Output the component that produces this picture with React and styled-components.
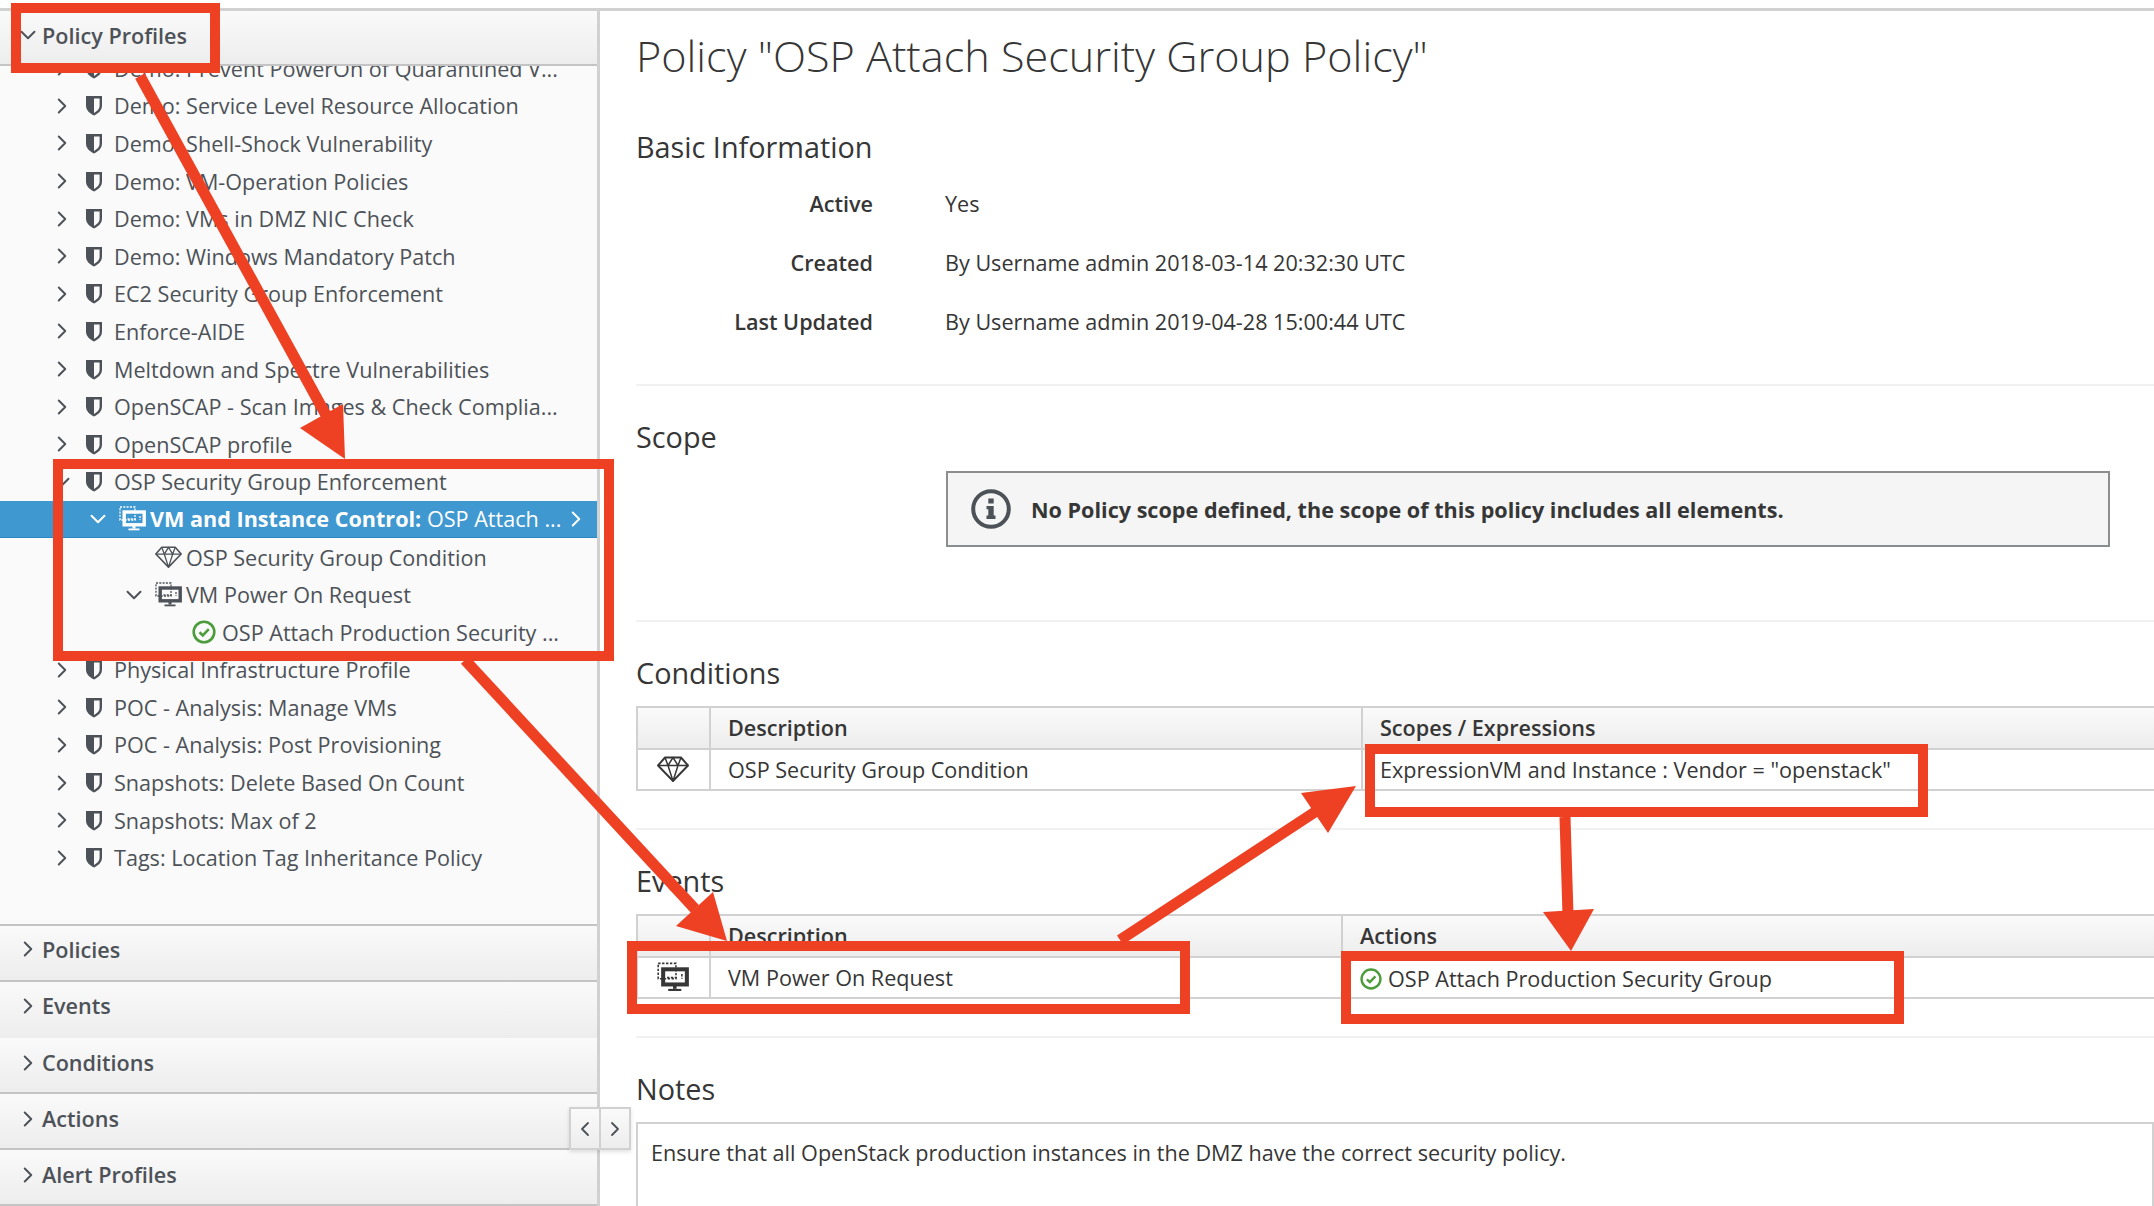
import React from 'react';
import styled, { createGlobalStyle } from 'styled-components';
import { ChevronRight, ChevronDown, ChevronLeft } from 'lucide-react';

const Global = createGlobalStyle`
  html, body { margin: 0; padding: 0; background: #fff; }
  body { font-family: "Open Sans", "Liberation Sans", sans-serif; color: #363636; }
  * { box-sizing: border-box; }
`;

const Page = styled.div`
  position: relative;
  width: 2154px;
  height: 1206px;
  overflow: hidden;
  padding-top: 8px;
`;
const Main = styled.div`
  position: relative;
  display: flex;
  height: 1198px;
  border-top: 3px solid #d1d1d1;
`;
const Sidebar = styled.aside`
  display: flex;
  flex-direction: column;
  flex: 0 0 600px;
  min-width: 0;
  background: #fafafa;
  border-right: 3px solid #d1d1d1;
`;
const PanelHeader = styled.div`
  display: flex;
  align-items: center;
  flex: 0 0 ${p => p.$h || 56}px;
  padding: 0 0 ${p => p.$lift || 0}px 20px;
  gap: 6px;
  font-size: 21.6px;
  font-weight: 600;
  color: #4d5258;
  background: linear-gradient(#fafafa, #ededed);
  border-bottom: ${p => (p.$flat ? 'none' : '2px solid #c4c4c4')};
`;
const HeaderRule = styled.div`
  flex: 0 0 2px;
  background: #c4c4c4;
`;
const HeaderToggle = styled.span`
  display: flex;
  justify-content: center;
  flex: 0 0 16px;
  min-width: 0;
  svg { flex: none; }
`;
const Tree = styled.div`
  flex: 1;
  min-height: 0;
  overflow: hidden;
`;
const TreeList = styled.ul`
  list-style: none;
  margin: -16.5px 0 0;
  padding: 0;
`;
const Row = styled.li`
  display: flex;
  align-items: center;
  height: 37.6px;
  padding-left: ${p => 53 + p.$level * 36}px;
  padding-right: 8px;
  font-size: 21.6px;
  white-space: nowrap;
  color: ${p => (p.$selected ? '#fff' : '#4d5258')};
  background: ${p => (p.$selected ? '#3f98d0' : 'transparent')};
  border-bottom: ${p => (p.$selected ? '1px solid #2c86c1' : 'none')};
`;
const Toggle = styled.span`
  display: flex;
  justify-content: center;
  flex: 0 0 18px;
  min-width: 0;
  margin-right: 14px;
  svg { flex: none; }
`;
const NodeIcon = styled.span`
  display: flex;
  align-items: center;
  flex: 0 0 ${p => 29 + (p.$pull || 0)}px;
  min-width: 0;
  margin-left: ${p => -(p.$pull || 0)}px;
  svg { flex: none; }
`;
const Label = styled.span`
  flex: 1;
  min-width: 0;
  b { font-weight: 700; }
`;

const Content = styled.main`
  flex: 1;
  min-width: 0;
  overflow: hidden;
  padding-left: 36px;
`;
const Title = styled.h1`
  margin: 19px 0 0;
  height: 52px;
  line-height: 52px;
  font-size: 43.2px;
  font-weight: 300;
  color: #363636;
  white-space: nowrap;
`;
const Section = styled.section`
  padding: ${p => p.$top ?? 33}px 0 ${p => p.$bottom ?? 37}px;
  border-bottom: ${p => (p.$last ? 'none' : '2px solid #f1f1f1')};
`;
const Heading = styled.h2`
  margin: 0 0 ${p => p.$gap ?? 15}px;
  height: 36px;
  line-height: 36px;
  font-size: 28.8px;
  font-weight: 400;
  color: #363636;
`;
const Fact = styled.div`
  display: flex;
  align-items: center;
  height: 59px;
  font-size: 21.6px;
`;
const FactLabel = styled.div`
  flex: 0 0 237px;
  text-align: right;
  font-weight: 600;
`;
const FactValue = styled.div`
  margin-left: 72px;
`;
const Alert = styled.div`
  display: flex;
  align-items: center;
  gap: 20px;
  margin: 0 44px 36px 310px;
  height: 76px;
  padding: 1px 0 0 23px;
  background: #f5f5f5;
  border: 2px solid #8b8d8f;
  font-size: 21.6px;
  font-weight: 700;
`;
const Table = styled.table`
  width: 1600px;
  table-layout: fixed;
  border-collapse: collapse;
  font-size: 21.6px;
`;
const Th = styled.th`
  height: 42px;
  padding: 0 17px;
  text-align: left;
  font-weight: 600;
  background: linear-gradient(#fafafa, #ededed);
  border: 2px solid #d1d1d1;
`;
const Td = styled.td`
  height: 41px;
  padding: 0 17px;
  border: 2px solid #d1d1d1;
  white-space: nowrap;
  svg { display: block; }
`;
const IconTd = styled(Td)`
  padding: 0 0 0 19px;
`;
const ActionCell = styled.span`
  display: inline-flex;
  align-items: center;
  gap: 6px;
  vertical-align: middle;
  padding-top: 2px;
`;
const Notes = styled.div`
  height: 200px;
  padding: 14px 13px;
  border: 2px solid #d1d1d1;
  font-size: 21.6px;
  line-height: 30px;
  background: #fff;
`;
const SplitterButtons = styled.div`
  position: absolute;
  left: 569px;
  top: 1096px;
  display: flex;
  width: 62px;
  height: 43px;
  background: linear-gradient(#fafafa, #ededed);
  border: 2px solid #d1d1d1;
  box-shadow: 0 2px 4px rgba(0, 0, 0, 0.12);
  color: #4d5258;
`;
const SplitterButton = styled.span`
  flex: 1;
  display: flex;
  align-items: center;
  justify-content: center;
  & + & { border-left: 2px solid #d1d1d1; }
`;
const Annotations = styled.svg`
  position: absolute;
  left: 0;
  top: 0;
  pointer-events: none;
`;

const Shield = () => (
  <svg width="18" height="21" viewBox="0 0 18 21">
    <path d="M1 1H17V10.500C17 15.500 13 18.500 9 20.500C5 18.500 1 15.500 1 10.500Z" fill="#4d5258" />
    <path d="M9 3.400H14.600V10.500C14.600 14 12 16.300 9 18Z" fill="#fafafa" />
  </svg>
);
const VmIcon = ({ color = '#4d5258', inner = '#fafafa', w = 27, h = 25 }) => (
  <svg width={w} height={h} viewBox="0 0 27 25" fill="none">
    <rect x="5.200" y="6" width="20" height="12.800" fill={inner} stroke={color} strokeWidth="3.400" />
    <rect x="1" y="1" width="15" height="13" stroke={color} strokeWidth="1.300" strokeDasharray="2 1.300" />
    <path d="M8.500 13H18M21 10V14" stroke={color} strokeWidth="1.300" strokeDasharray="2 1.200" />
    <rect x="13.500" y="20" width="3" height="2.500" fill={color} />
    <rect x="9.500" y="22.500" width="11" height="1.800" fill={color} />
  </svg>
);
const Diamond = ({ w = 27, h = 22, color = '#4d5258' }) => (
  <svg width={w} height={h} viewBox="0 0 32 26" fill="none" stroke={color} strokeWidth="1.900" strokeLinejoin="round">
    <path d="M8 1.500H24L31 9.500L16 25L1 9.500Z" />
    <path d="M1 9.500H31M8 1.500L11 9.500L16 25L21 9.500L24 1.500M11 9.500L16 1.500L21 9.500" strokeWidth="1.500" />
  </svg>
);
const Check = ({ size = 24 }) => (
  <svg width={size} height={size} viewBox="0 0 24 24" fill="none">
    <circle cx="12" cy="12" r="10.300" stroke="#4c9c3c" strokeWidth="2.600" />
    <path d="M7.500 12.300L10.800 15.400L16.800 9.200" stroke="#4c9c3c" strokeWidth="2.600" />
  </svg>
);
const Info = () => (
  <svg width="40" height="40" viewBox="0 0 40 40" fill="none">
    <circle cx="20" cy="20" r="17.800" stroke="#4d5258" strokeWidth="4" />
    <rect x="17.300" y="9.500" width="5.400" height="5" fill="#4d5258" />
    <path d="M15.500 17H22.700V26.500H24.500V30H15.500V26.500H17.300V20.300H15.500Z" fill="#4d5258" />
  </svg>
);

const R = () => <ChevronRight size={26} strokeWidth={1.800} />;
const D = () => <ChevronDown size={26} strokeWidth={1.800} />;

const profilesBefore = [
  'Demo: Prevent PowerOn of Quarantined V...',
  'Demo: Service Level Resource Allocation',
  'Demo: Shell-Shock Vulnerability',
  'Demo: VM-Operation Policies',
  'Demo: VMs in DMZ NIC Check',
  'Demo: Windows Mandatory Patch',
  'EC2 Security Group Enforcement',
  'Enforce-AIDE',
  'Meltdown and Spectre Vulnerabilities',
  'OpenSCAP - Scan Images & Check Complia...',
  'OpenSCAP profile',
];
const profilesAfter = [
  'Physical Infrastructure Profile',
  'POC - Analysis: Manage VMs',
  'POC - Analysis: Post Provisioning',
  'Snapshots: Delete Based On Count',
  'Snapshots: Max of 2',
  'Tags: Location Tag Inheritance Policy',
];

const ProfileRow = ({ text, open }) => (
  <Row $level={0}>
    <Toggle>{open ? <D /> : <R />}</Toggle>
    <NodeIcon><Shield /></NodeIcon>
    <Label>{text}</Label>
  </Row>
);

const boxes = [
  [11, 3, 209, 70],
  [53, 459, 561, 202],
  [627, 941, 563, 73],
  [1365, 744, 563, 73],
  [1341, 951, 563, 73],
];
const arrows = [
  { line: [140, 76, 326, 415], head: '343,404 300,428 345,459' },
  { line: [465, 660, 695, 909], head: '713,892 676,926 727,941' },
  { line: [1120, 940, 1315, 812], head: '1301,793 1328,833 1356,786' },
  { line: [1565, 817, 1568, 915], head: '1543,912 1594,909 1571,951' },
];

export default function App() {
  return (
    <Page>
      <Global />
      <Main>
        <Sidebar>
          <PanelHeader $h={55} $lift={5}>
            <HeaderToggle><D /></HeaderToggle>
            Policy Profiles
          </PanelHeader>
          <Tree>
            <TreeList>
              {profilesBefore.map(t => <ProfileRow key={t} text={t} />)}
              <ProfileRow text="OSP Security Group Enforcement" open />
              <Row $level={1} $selected>
                <Toggle><D /></Toggle>
                <NodeIcon $pull={2}><VmIcon color="#fff" inner="#3f98d0" /></NodeIcon>
                <Label><b>VM and Instance Control:</b> OSP Attach ...</Label>
                <R />
              </Row>
              <Row $level={2}>
                <Toggle />
                <NodeIcon $pull={2}><Diamond /></NodeIcon>
                <Label>OSP Security Group Condition</Label>
              </Row>
              <Row $level={2}>
                <Toggle><D /></Toggle>
                <NodeIcon $pull={2}><VmIcon /></NodeIcon>
                <Label>VM Power On Request</Label>
              </Row>
              <Row $level={3}>
                <Toggle />
                <NodeIcon $pull={1}><Check /></NodeIcon>
                <Label>OSP Attach Production Security ...</Label>
              </Row>
              {profilesAfter.map(t => <ProfileRow key={t} text={t} />)}
            </TreeList>
          </Tree>
          <HeaderRule />
          <PanelHeader $lift={8}><HeaderToggle><R /></HeaderToggle>Policies</PanelHeader>
          <PanelHeader $flat $lift={9}><HeaderToggle><R /></HeaderToggle>Events</PanelHeader>
          <PanelHeader $lift={5}><HeaderToggle><R /></HeaderToggle>Conditions</PanelHeader>
          <PanelHeader $lift={5}><HeaderToggle><R /></HeaderToggle>Actions</PanelHeader>
          <PanelHeader $lift={5}><HeaderToggle><R /></HeaderToggle>Alert Profiles</PanelHeader>
        </Sidebar>
        <Content>
          <Title>Policy "OSP Attach Security Group Policy"</Title>
          <Section $top={47} $bottom={33}>
            <Heading $gap={8.500}>Basic Information</Heading>
            <Fact><FactLabel>Active</FactLabel><FactValue>Yes</FactValue></Fact>
            <Fact><FactLabel>Created</FactLabel><FactValue>By Username admin 2018-03-14 20:32:30 UTC</FactValue></Fact>
            <Fact><FactLabel>Last Updated</FactLabel><FactValue>By Username admin 2019-04-28 15:00:44 UTC</FactValue></Fact>
          </Section>
          <Section>
            <Heading $gap={16}>Scope</Heading>
            <Alert><Info />No Policy scope defined, the scope of this policy includes all elements.</Alert>
          </Section>
          <Section>
            <Heading>Conditions</Heading>
            <Table>
              <colgroup><col width="73" /><col width="652" /><col /></colgroup>
              <thead><tr><Th /><Th>Description</Th><Th>Scopes / Expressions</Th></tr></thead>
              <tbody>
                <tr>
                  <IconTd><Diamond w={32} h={26} color="#363636" /></IconTd>
                  <Td>OSP Security Group Condition</Td>
                  <Td>ExpressionVM and Instance : Vendor = "openstack"</Td>
                </tr>
              </tbody>
            </Table>
          </Section>
          <Section>
            <Heading>Events</Heading>
            <Table>
              <colgroup><col width="73" /><col width="632" /><col /></colgroup>
              <thead><tr><Th /><Th>Description</Th><Th>Actions</Th></tr></thead>
              <tbody>
                <tr>
                  <IconTd><VmIcon w={32} h={30} color="#363636" inner="#fff" /></IconTd>
                  <Td>VM Power On Request</Td>
                  <Td><ActionCell><Check size={22} />OSP Attach Production Security Group</ActionCell></Td>
                </tr>
              </tbody>
            </Table>
          </Section>
          <Section $last $bottom={0}>
            <Heading>Notes</Heading>
            <Notes>Ensure that all OpenStack production instances in the DMZ have the correct security policy.</Notes>
          </Section>
        </Content>
        <SplitterButtons>
          <SplitterButton><ChevronLeft size={24} strokeWidth={1.800} /></SplitterButton>
          <SplitterButton><ChevronRight size={24} strokeWidth={1.800} /></SplitterButton>
        </SplitterButtons>
      </Main>
      <Annotations width="2154" height="1206" viewBox="0 0 2154 1206">
        {boxes.map(([x, y, w, h]) => (
          <rect key={x} x={x + 5} y={y + 5} width={w - 10} height={h - 10} fill="none" stroke="#ee4023" strokeWidth="10" />
        ))}
        {arrows.map(a => (
          <g key={a.head}>
            <line x1={a.line[0]} y1={a.line[1]} x2={a.line[2]} y2={a.line[3]} stroke="#ee4023" strokeWidth="11" />
            <polygon points={a.head} fill="#ee4023" />
          </g>
        ))}
      </Annotations>
    </Page>
  );
}
